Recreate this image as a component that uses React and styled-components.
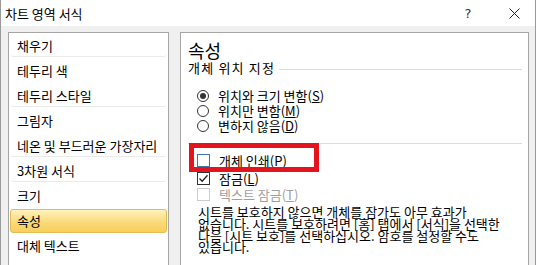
import React from 'react';
import styled, { createGlobalStyle } from 'styled-components';

const GlobalStyle = createGlobalStyle`
  html, body {
    margin: 0;
    padding: 0;
    background: #f0f0f0;
    overflow: hidden;
  }
  body {
    font-family: "Noto Sans CJK KR", "Noto Sans", sans-serif;
    font-size: 13px;
    color: #000;
  }
`;

const Window = styled.div`
  width: 536px;
  height: 265px;
  box-sizing: border-box;
  border-left: 1px solid #9a9a9a;
  border-right: 1px solid #9a9a9a;
  background: #f0f0f0;
  display: flex;
  flex-direction: column;
  overflow: hidden;
`;

const TitleBar = styled.div`
  height: 26px;
  flex-shrink: 0;
  background: #fff;
  display: flex;
  align-items: center;
  padding-left: 4px;
`;

const Title = styled.div`
  flex: 1;
  line-height: 15px;
`;

const TitleButton = styled.div`
  width: ${(p) => p.$w}px;
  margin-right: ${(p) => p.$gap || 0}px;
  display: flex;
  justify-content: center;
  align-items: center;
  font-size: 13px;
  font-family: "DejaVu Sans", sans-serif;
  color: #333;
`;

const Body = styled.div`
  flex: 1;
  display: flex;
  gap: 11px;
  padding: 6px 6px 0 7px;
`;

const NavPanel = styled.div`
  width: 161px;
  height: 260px;
  box-sizing: border-box;
  background: #fff;
  border: 1px solid #a6a6a6;
  border-bottom: none;
  padding: 0 1px;
`;

const NavItem = styled.div`
  height: 25px;
  box-sizing: border-box;
  padding-left: 6px;
  line-height: 23px;
  border: 1px solid transparent;
  border-radius: 3px;
  white-space: nowrap;
  box-shadow: ${(p) => (p.$sep ? 'inset 0 -1px 0 #ebebeb' : 'none')};
  ${(p) =>
    p.$active &&
    `
    margin-top: 1px;
    height: 24px;
    line-height: 22px;
    border-color: #e2bd55;
    background: linear-gradient(#fff2bd, #fbd874 60%, #f8cf5c);
    box-shadow: none;
  `}
`;

const ContentPanel = styled.div`
  position: relative;
  flex: 1;
  height: 260px;
  box-sizing: border-box;
  background: #fff;
  border: 1px solid #a6a6a6;
  border-bottom: none;
  padding: 6px 6px 0 7px;
`;

const Heading = styled.div`
  font-size: 18px;
  line-height: 22px;
`;

const GroupLabel = styled.div`
  display: flex;
  align-items: center;
  line-height: 14px;
  letter-spacing: 1.2px;
  &::after {
    content: '';
    flex: 1;
    height: 1px;
    background: #dcdcdc;
    margin-left: 4px;
    margin-top: 2px;
  }
`;

const OptionList = styled.div`
  display: flex;
  flex-direction: column;
  padding-left: 9px;
  margin-top: ${(p) => p.$top || 0}px;
`;

const Option = styled.label`
  display: flex;
  align-items: center;
  gap: 9px;
  height: ${(p) => p.$h || 15}px;
  line-height: 15px;
  white-space: nowrap;
  color: ${(p) => (p.$disabled ? '#a0a0a0' : '#000')};
  u {
    text-decoration-thickness: 1px;
    text-underline-offset: 1px;
  }
`;

const Radio = styled.span`
  width: 12px;
  height: 12px;
  box-sizing: border-box;
  border: 1px solid #333;
  border-radius: 50%;
  display: flex;
  align-items: center;
  justify-content: center;
  flex-shrink: 0;
  &::after {
    content: '';
    width: 6px;
    height: 6px;
    border-radius: 50%;
    background: ${(p) => (p.$on ? '#333' : 'transparent')};
  }
`;

const Check = styled.span`
  width: 13px;
  height: 13px;
  box-sizing: border-box;
  border: 1px solid ${(p) => p.$border || '#333'};
  background: #fff;
  display: flex;
  align-items: center;
  justify-content: center;
  flex-shrink: 0;
`;

const Divider = styled.div`
  height: 1px;
  background: #dcdcdc;
  margin: 10px 0 0 0;
`;

const Note = styled.p`
  margin: 4px 0 0 10px;
  line-height: 11.8px;
  white-space: nowrap;
`;

const Highlight = styled.div`
  position: absolute;
  left: 8px;
  top: 110px;
  width: 130px;
  height: 29px;
  box-sizing: border-box;
  border: 5px solid #e3141d;
  pointer-events: none;
`;

const navItems = [
  { label: '채우기', sep: true },
  { label: '테두리 색' },
  { label: '테두리 스타일', sep: true },
  { label: '그림자' },
  { label: '네온 및 부드러운 가장자리', sep: true },
  { label: '3차원 서식', sep: true },
  { label: '크기' },
  { label: '속성', active: true },
  { label: '대체 텍스트' },
];

const CheckMark = () => (
  <svg width="11" height="11" viewBox="0 0 11 11">
    <path d="M1.5 5.5 L4.2 8.2 L9.5 2.2" fill="none" stroke="#222" strokeWidth="1.3" />
  </svg>
);

const CloseIcon = () => (
  <svg width="11" height="11" viewBox="0 0 11 11">
    <path d="M0.5 0.5 L10.5 10.5 M10.5 0.5 L0.5 10.5" stroke="#222" strokeWidth="1" fill="none" />
  </svg>
);

export default function App() {
  return (
    <>
      <GlobalStyle />
      <Window>
        <TitleBar>
          <Title>차트 영역 서식</Title>
          <TitleButton $w={20} $gap={23}>?</TitleButton>
          <TitleButton $w={26} $gap={8}>
            <CloseIcon />
          </TitleButton>
        </TitleBar>
        <Body>
          <NavPanel>
            {navItems.map((it) => (
              <NavItem key={it.label} $sep={it.sep} $active={it.active}>
                {it.label}
              </NavItem>
            ))}
          </NavPanel>
          <ContentPanel>
            <Heading>속성</Heading>
            <GroupLabel>개체 위치 지정</GroupLabel>
            <OptionList $top={13}>
              <Option>
                <Radio $on />
                <span>위치와 크기 변함(<u>S</u>)</span>
              </Option>
              <Option>
                <Radio />
                <span>위치만 변함(<u>M</u>)</span>
              </Option>
              <Option>
                <Radio />
                <span>변하지 않음(<u>D</u>)</span>
              </Option>
            </OptionList>
            <Divider />
            <OptionList $top={7}>
              <Option $h={19}>
                <Check $border="#3c78b0" />
                <span>개체 인쇄(<u>P</u>)</span>
              </Option>
              <Option $h={16}>
                <Check>
                  <CheckMark />
                </Check>
                <span>잠금(<u>L</u>)</span>
              </Option>
              <Option $h={16} $disabled>
                <Check $border="#cccccc" />
                <span>텍스트 잠금(<u>T</u>)</span>
              </Option>
            </OptionList>
            <Note>
              시트를 보호하지 않으면 개체를 잠가도 아무 효과가
              <br />
              없습니다. 시트를 보호하려면 [홈] 탭에서 [서식]을 선택한
              <br />
              다음 [시트 보호]를 선택하십시오. 암호를 설정할 수도
              <br />
              있습니다.
            </Note>
            <Highlight />
          </ContentPanel>
        </Body>
      </Window>
    </>
  );
}
